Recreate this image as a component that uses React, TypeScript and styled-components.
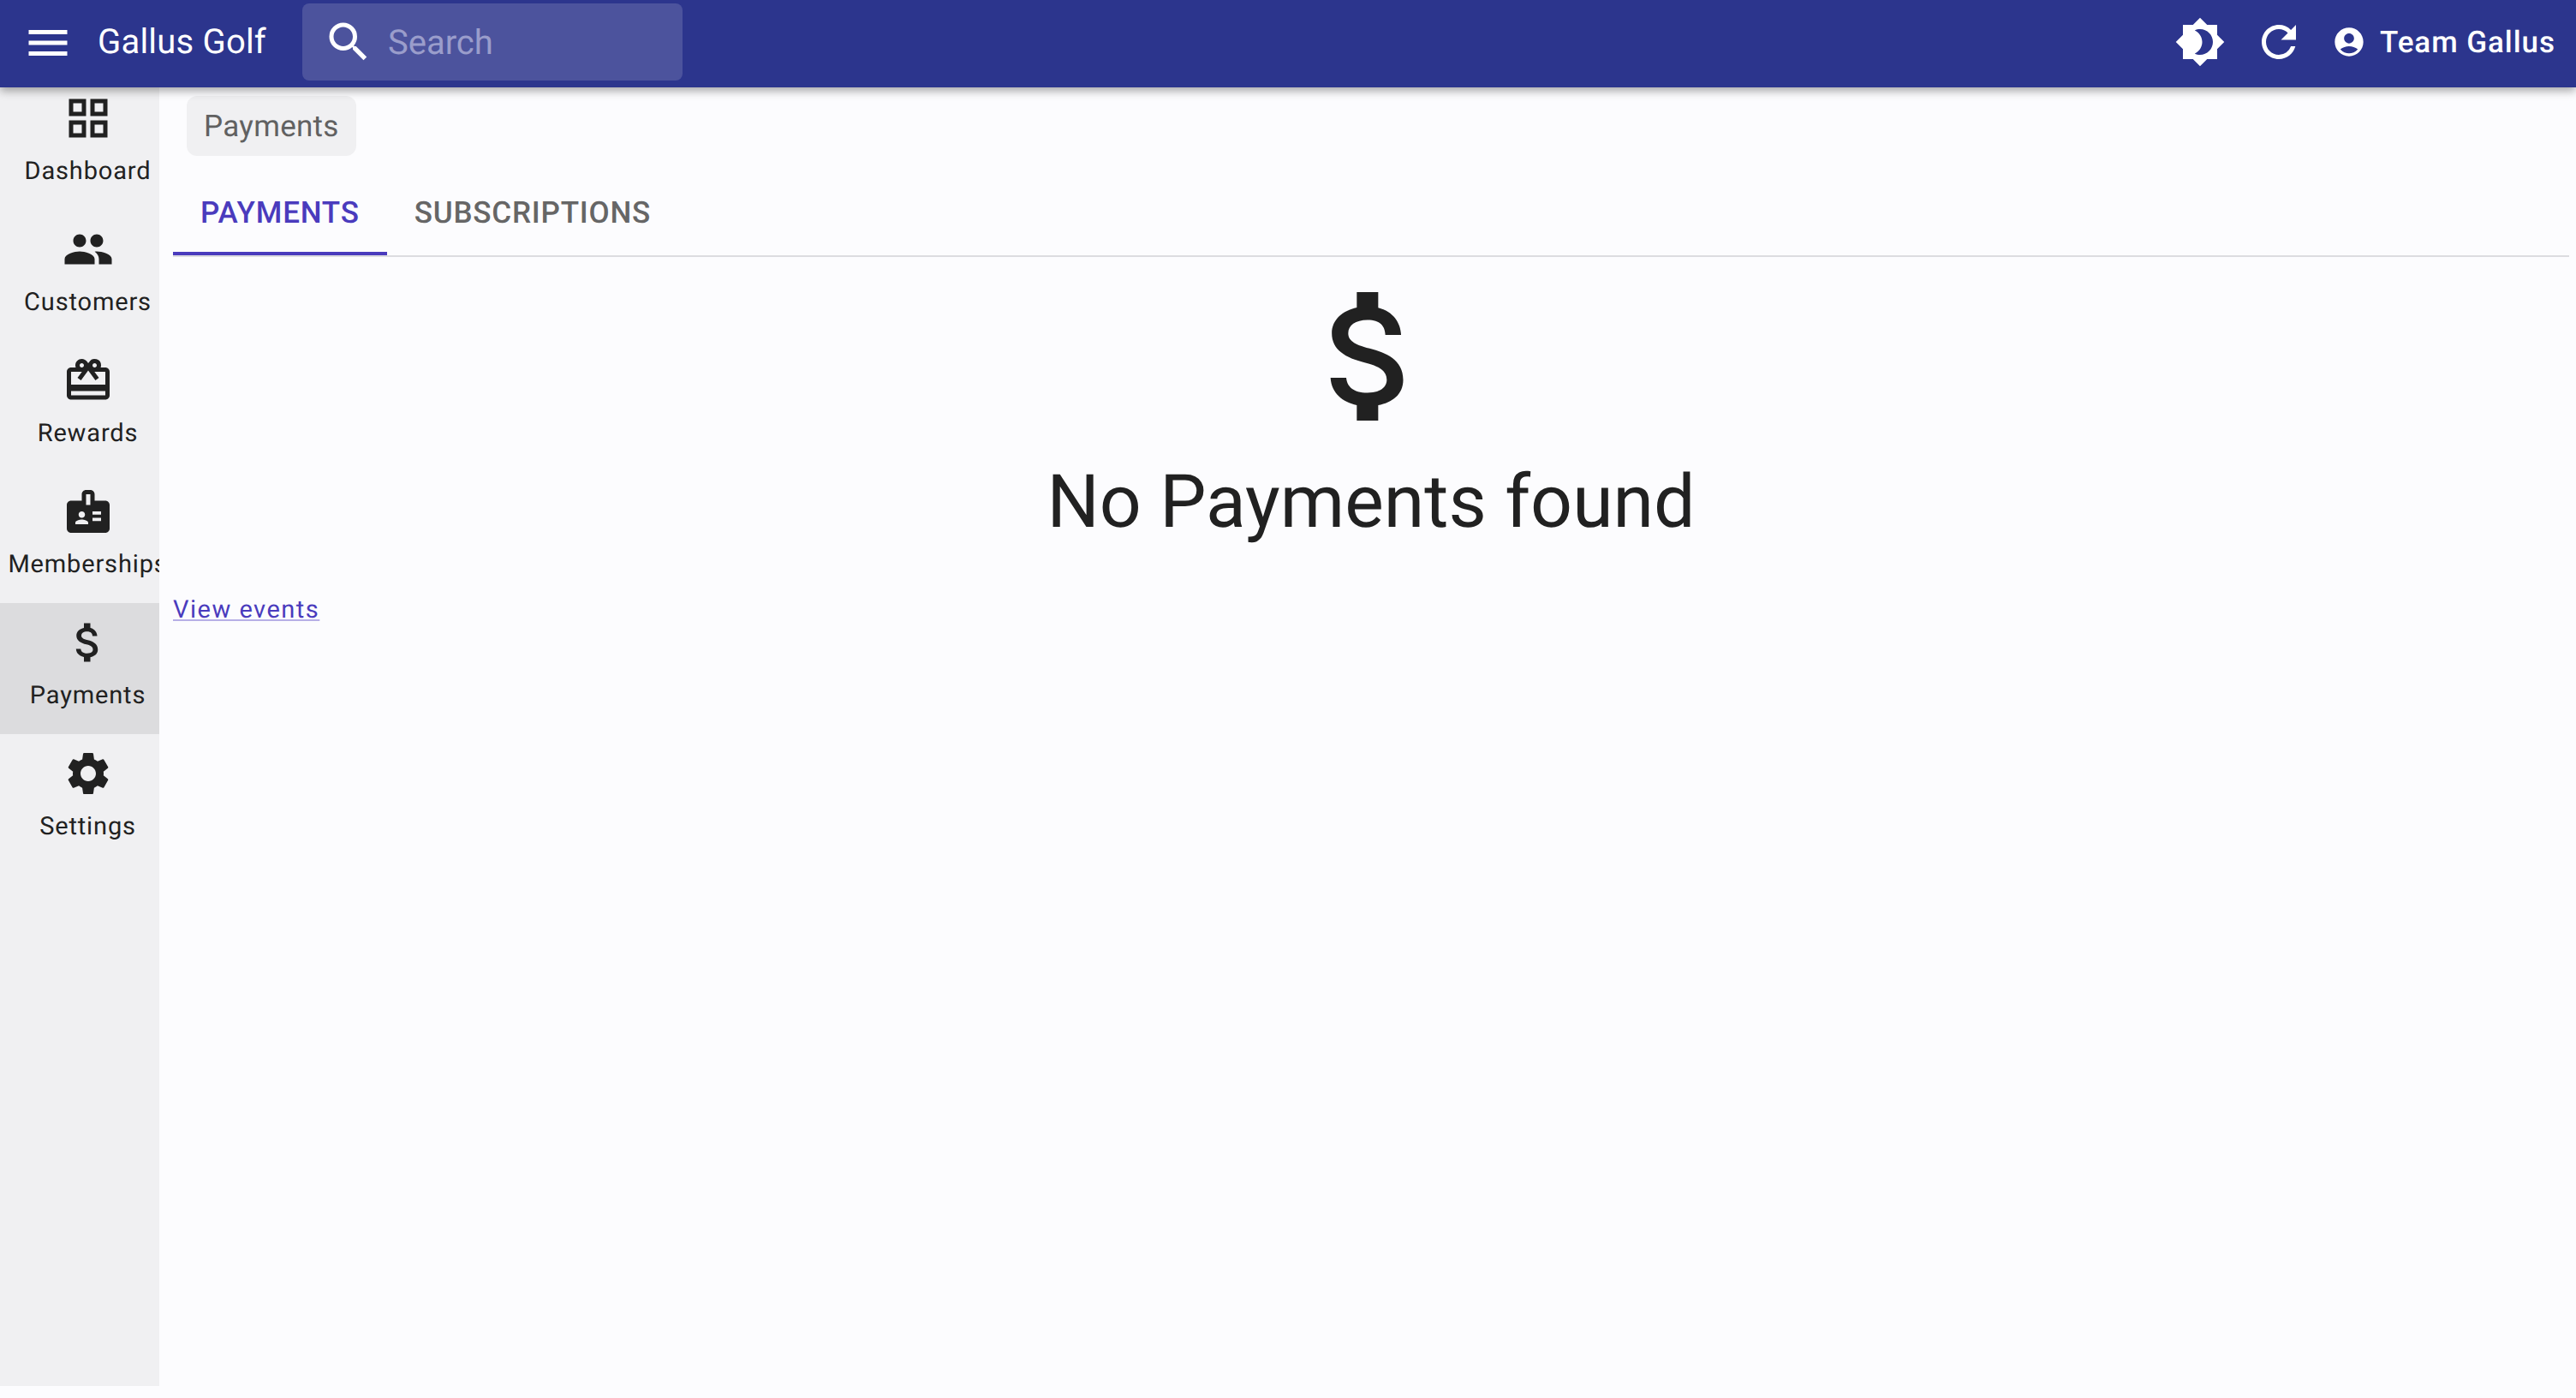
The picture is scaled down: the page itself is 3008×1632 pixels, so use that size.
import React from 'react';
import {
  MdAccountCircle,
  MdAttachMoney,
  MdBadge,
  MdBrightness4,
  MdMenu,
  MdOutlineCardGiftcard,
  MdOutlineGridView,
  MdPeople,
  MdRefresh,
  MdSearch,
  MdSettings,
} from 'react-icons/md';
import styled, { createGlobalStyle } from 'styled-components';

interface NavItemType {
  title: string;
  logo: JSX.Element;
}

const GlobalStyle = createGlobalStyle`
  html, body {
    margin: 0;
    padding: 0;
    background: #fcfcfe;
    font-family: Roboto, "Liberation Sans", sans-serif;
    color: #212121;
    text-rendering: geometricPrecision;
  }
`;

const Page = styled.div`
  width: 3008px;
  height: 1632px;
  display: flex;
  flex-direction: column;
  overflow: hidden;
`;

const TopBar = styled.header`
  position: relative;
  z-index: 2;
  flex: none;
  height: 102px;
  display: flex;
  align-items: center;
  background: #2c358d;
  color: #fff;
  box-shadow: 0 4px 10px rgba(0, 0, 0, 0.35);
`;

const MenuButton = styled.div`
  display: flex;
  margin-left: 26px;
  margin-top: -2px;
  font-size: 60px;
`;

const Brand = styled.div`
  margin-left: 28px;
  margin-top: -4px;
  font-size: 40px;
  line-height: 48px;
  letter-spacing: 0.2px;
  white-space: nowrap;
`;

const SearchBox = styled.div`
  width: 444px;
  height: 90px;
  margin-left: 42px;
  margin-top: -4px;
  display: flex;
  align-items: center;
  padding-left: 24px;
  box-sizing: border-box;
  background: #4c539d;
  border-radius: 8px;
  font-size: 60px;
`;

const SearchText = styled.span`
  margin-left: 16px;
  font-size: 40px;
  color: #9a9dcb;
`;

const BarActions = styled.div`
  margin-left: auto;
  margin-right: 24px;
  margin-top: -4px;
  display: flex;
  align-items: center;
`;

const ThemeIcon = styled.div`
  display: flex;
  font-size: 60px;
`;

const RefreshIcon = styled.div`
  display: flex;
  margin-left: 32px;
  font-size: 60px;
`;

const AccountIcon = styled.div`
  display: flex;
  margin-left: 32px;
  font-size: 40px;
`;

const UserName = styled.div`
  margin-left: 16px;
  font-size: 35px;
  font-weight: 500;
  letter-spacing: 0.95px;
  white-space: nowrap;
`;

const Body = styled.div`
  flex: 1;
  display: flex;
  min-height: 0;
  padding-bottom: 14px;
`;

const SideNav = styled.nav`
  flex: none;
  width: 186px;
  overflow: hidden;
  background: #f0f0f2;
`;

const NavList = styled.div`
  width: 205px;
  margin-top: -10px;
`;

const NavItem = styled.div<{ $active?: boolean }>`
  height: 153px;
  display: flex;
  flex-direction: column;
  align-items: center;
  padding-top: 16px;
  box-sizing: border-box;
  background: ${(props) => (props.$active ? '#dcdcde' : 'transparent')};
  font-size: 60px;
  svg {
    display: block;
  }
`;

const NavTitle = styled.div`
  margin-top: 11px;
  font-size: 29px;
  line-height: 42px;
  letter-spacing: 0.85px;
  white-space: nowrap;
`;

const Main = styled.main`
  flex: 1;
  min-width: 0;
  padding: 10px 8px 0 16px;
`;

const Crumb = styled.div`
  display: inline-block;
  margin-left: 16px;
  padding: 0 20px;
  height: 70px;
  line-height: 71px;
  border-radius: 12px;
  background: #f0f0f2;
  font-size: 35px;
  color: #616161;
  letter-spacing: 0.3px;
`;

const Tabs = styled.div`
  display: flex;
  height: 114px;
  margin-top: 4px;
  box-sizing: border-box;
  border-bottom: 2px solid #dcdce0;
`;

const Tab = styled.div<{ $active?: boolean }>`
  height: 112px;
  padding: 16px 32px 0;
  display: flex;
  align-items: center;
  box-sizing: border-box;
  font-size: 35px;
  font-weight: 500;
  letter-spacing: 0.8px;
  color: ${(props) => (props.$active ? '#4a3bbd' : '#666666')};
  border-bottom: 4px solid ${(props) => (props.$active ? '#4a3bbd' : 'transparent')};
`;

const EmptyState = styled.div`
  display: flex;
  flex-direction: column;
  align-items: center;
`;

const EmptyIcon = styled.div`
  display: flex;
  margin-top: 16px;
  font-size: 200px;
`;

const EmptyTitle = styled.div`
  margin-top: 14px;
  font-size: 86px;
  line-height: 112px;
  white-space: nowrap;
`;

const EventsLink = styled.a`
  display: inline-block;
  margin-top: 50px;
  font-size: 29px;
  line-height: 40px;
  letter-spacing: 1.5px;
  color: #4a3bbd;
  text-decoration: underline;
  text-decoration-color: #b7afe6;
`;

const NAV_ITEMS: NavItemType[] = [
  { title: 'Dashboard', logo: <MdOutlineGridView /> },
  { title: 'Customers', logo: <MdPeople /> },
  { title: 'Rewards', logo: <MdOutlineCardGiftcard /> },
  { title: 'Memberships', logo: <MdBadge /> },
  { title: 'Payments', logo: <MdAttachMoney /> },
  { title: 'Settings', logo: <MdSettings /> },
];

const App: React.FC = () => {
  return (
    <Page>
      <GlobalStyle />
      <TopBar>
        <MenuButton>
          <MdMenu />
        </MenuButton>
        <Brand>Gallus Golf</Brand>
        <SearchBox>
          <MdSearch />
          <SearchText>Search</SearchText>
        </SearchBox>
        <BarActions>
          <ThemeIcon>
            <MdBrightness4 />
          </ThemeIcon>
          <RefreshIcon>
            <MdRefresh />
          </RefreshIcon>
          <AccountIcon>
            <MdAccountCircle />
          </AccountIcon>
          <UserName>Team Gallus</UserName>
        </BarActions>
      </TopBar>
      <Body>
        <SideNav>
          <NavList>
            {NAV_ITEMS.map((item) => (
              <NavItem key={item.title} $active={item.title === 'Payments'}>
                {item.logo}
                <NavTitle>{item.title}</NavTitle>
              </NavItem>
            ))}
          </NavList>
        </SideNav>
        <Main>
          <Crumb>Payments</Crumb>
          <Tabs>
            <Tab $active>PAYMENTS</Tab>
            <Tab>SUBSCRIPTIONS</Tab>
          </Tabs>
          <EmptyState>
            <EmptyIcon>
              <MdAttachMoney />
            </EmptyIcon>
            <EmptyTitle>No Payments found</EmptyTitle>
          </EmptyState>
          <EventsLink href="#">View events</EventsLink>
        </Main>
      </Body>
    </Page>
  );
};

export default App;
